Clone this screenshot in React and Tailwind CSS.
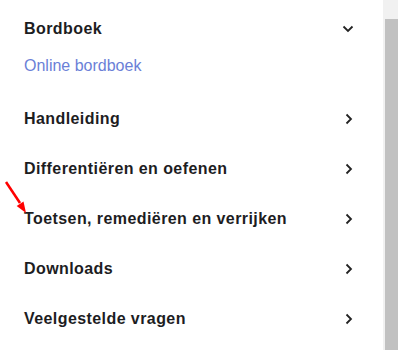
import React from 'react'

const items = [
  'Handleiding',
  'Differentiëren en oefenen',
  'Toetsen, remediëren en verrijken',
  'Downloads',
  'Veelgestelde vragen',
]

const ChevronRight = () => (
  <svg width="8" height="12" viewBox="0 0 8 12" className="shrink-0">
    <polyline points="1.5,1.5 6,6 1.5,10.5" fill="none" stroke="#222" strokeWidth="1.8" />
  </svg>
)

const ChevronDown = () => (
  <svg width="12" height="8" viewBox="0 0 12 8" className="shrink-0">
    <polyline points="1.5,1.5 6,6 10.5,1.5" fill="none" stroke="#222" strokeWidth="1.8" />
  </svg>
)

export default function App() {
  return (
    <div
      className="flex w-[398px] h-[350px] overflow-hidden bg-white text-[#1d1d1f]"
      style={{ fontFamily: '"Liberation Sans", Arial, sans-serif' }}
    >
      <div className="relative flex-1">
        <div className="pl-6 pr-[29px] pt-[17px] pb-[16px]">
          <div className="flex items-center justify-between h-6">
            <span className="text-base font-bold tracking-[0.42px]">Bordboek</span>
            <ChevronDown />
          </div>
          <div className="mt-[13px] h-6 flex items-center">
            <span className="text-base text-[#6b7fd7]">Online bordboek</span>
          </div>
        </div>
        {items.map(item => (
          <div key={item} className="flex items-center justify-between h-[50px] pl-6 pr-[30px]">
            <span className="text-base font-bold tracking-[0.42px]">{item}</span>
            <ChevronRight />
          </div>
        ))}
        <svg className="absolute left-0 top-0 pointer-events-none" width="40" height="230">
          <line x1="6" y1="182" x2="20" y2="203" stroke="#ff0000" strokeWidth="2.5" />
          <polygon points="26,213 23.5,201.6 16.7,206" fill="#ff0000" />
        </svg>
      </div>
      <div className="w-[15px] bg-[#f1f1f1] pl-[2px] pt-[19px] flex flex-col">
        <div className="flex-1 bg-[#c1c1c1]" />
      </div>
    </div>
  )
}
